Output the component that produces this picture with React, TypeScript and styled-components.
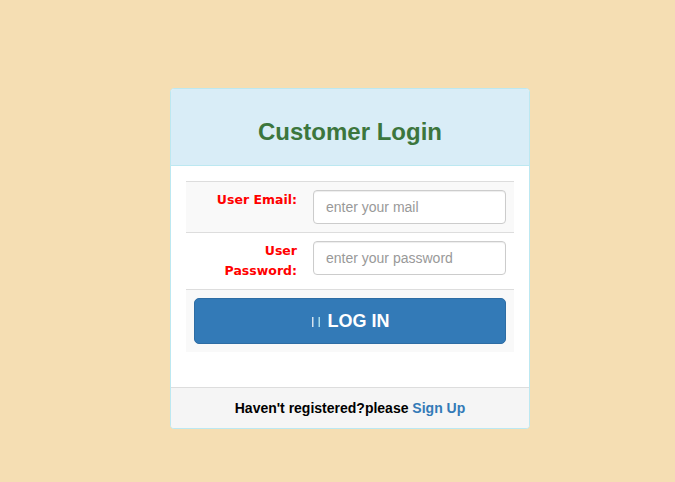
import React from "react";
import styled, { createGlobalStyle } from "styled-components";

const GlobalStyle = createGlobalStyle`
  html, body {
    margin: 0;
    padding: 0;
    background: #f5deb3;
    font-family: "Liberation Sans", Arial, sans-serif;
    font-size: 14px;
    line-height: 20px;
    color: #333;
  }
  * { box-sizing: border-box; }
`;

const Page = styled.div`
  padding: 88px 0 0 170px;
`;

const Panel = styled.div`
  width: 360px;
  background: #fff;
  border: 1px solid #bce8f1;
  border-radius: 4px;
  overflow: hidden;
`;

const Heading = styled.div`
  background: #d9edf7;
  border-bottom: 1px solid #bce8f1;
  padding: 30px 15px 20px;
  text-align: center;

  h2 {
    margin: 0;
    font-size: 24px;
    line-height: 26px;
    font-weight: bold;
    color: #3c763d;
  }
`;

const Body = styled.div`
  padding: 15px;
`;

const Table = styled.div`
  margin-bottom: 20px;
`;

const Row = styled.div<{ $striped?: boolean }>`
  display: grid;
  grid-template-columns: 119px 1fr;
  border-top: 1px solid #ddd;
  background: ${(p) => (p.$striped ? "#f9f9f9" : "#fff")};
`;

const Label = styled.label`
  padding: 8px;
  text-align: right;
  font-family: "Comic Sans MS", "DejaVu Sans", sans-serif;
  font-weight: bold;
  font-size: 12.5px;
  line-height: 20px;
  color: #ff0000;
`;

const Cell = styled.div<{ $span?: boolean }>`
  padding: 8px;
  grid-column: ${(p) => (p.$span ? "1 / span 2" : "auto")};
`;

const Input = styled.input`
  display: block;
  width: 100%;
  height: 34px;
  padding: 6px 12px;
  font-family: "Liberation Sans", Arial, sans-serif;
  font-size: 14px;
  color: #555;
  background: #fff;
  border: 1px solid #ccc;
  border-radius: 4px;
  box-shadow: inset 0 1px 1px rgba(0, 0, 0, 0.075);
  outline: none;

  &::placeholder {
    color: #999;
  }
`;

const Button = styled.button`
  display: flex;
  align-items: center;
  justify-content: center;
  gap: 5px;
  width: 100%;
  height: 46px;
  padding: 10px 16px;
  background: #337ab7;
  border: 1px solid #2e6da4;
  border-radius: 5px;
  color: #fff;
  font-family: "Liberation Sans", Arial, sans-serif;
  font-size: 18px;
  font-weight: bold;
  line-height: 24px;
  cursor: pointer;
`;

const Footer = styled.div`
  background: #f5f5f5;
  border-top: 1px solid #ddd;
  padding: 10px 15px;
  text-align: center;
  font-weight: bold;
  color: #000;

  a {
    color: #337ab7;
    text-decoration: none;
  }
`;

const GlyphIcon = () => (
  <svg width="12" height="12" viewBox="0 0 12 12">
    <rect x="1" y="2" width="1.5" height="10" fill="#d6e2ee" />
    <rect x="7.5" y="2" width="1.5" height="10" fill="#a8dcec" />
  </svg>
);

export default function App() {
  return (
    <>
      <GlobalStyle />
      <Page>
        <Panel>
          <Heading>
            <h2>Customer Login</h2>
          </Heading>
          <Body>
            <Table>
              <Row $striped>
                <Label htmlFor="email">User Email:</Label>
                <Cell>
                  <Input id="email" type="text" placeholder="enter your mail" />
                </Cell>
              </Row>
              <Row>
                <Label htmlFor="password">
                  User
                  <br />
                  Password:
                </Label>
                <Cell>
                  <Input id="password" type="password" placeholder="enter your password" />
                </Cell>
              </Row>
              <Row $striped>
                <Cell $span>
                  <Button type="submit">
                    <GlyphIcon />
                    LOG IN
                  </Button>
                </Cell>
              </Row>
            </Table>
          </Body>
          <Footer>
            Haven't registered?please <a href="#">Sign Up</a>
          </Footer>
        </Panel>
      </Page>
    </>
  );
}
